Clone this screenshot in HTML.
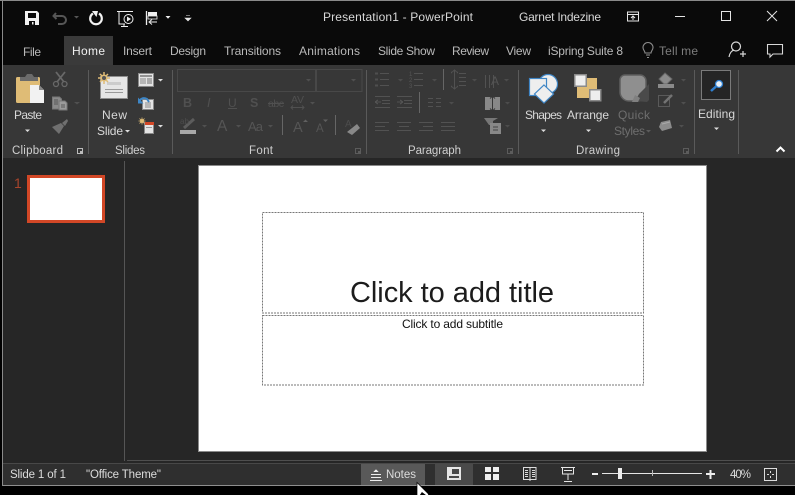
<!DOCTYPE html>
<html><head><meta charset="utf-8"><style>
html,body{margin:0;padding:0;background:#000;width:795px;height:495px;overflow:hidden}
svg{display:block}
text{font-family:"Liberation Sans",sans-serif;font-size:12px;fill:#d8d8d8}
.tab{fill:#b9b9b9}.lab{fill:#cfcfcf;font-size:11.5px}.dis{fill:#6e6e6e}.st{fill:#dcdcdc;font-size:11.5px}
</style></head><body>
<svg width="795" height="495" viewBox="0 0 795 495" xmlns="http://www.w3.org/2000/svg" shape-rendering="crispEdges">
<rect width="795" height="495" fill="#000"/>
<rect x="3" y="1" width="792" height="64" fill="#0a0a0a"/>
<rect x="0" y="0" width="795" height="1" fill="#8a8a8a"/>
<rect x="3" y="65" width="792" height="93" fill="#373737"/>
<rect x="64" y="36" width="49" height="29" fill="#3a3a3a"/>
<rect x="3" y="158" width="792" height="305" fill="#262626"/>
<rect x="3" y="464" width="792" height="21" fill="#2f2f2f"/>
<rect x="3" y="463" width="792" height="1" fill="#484848"/>
<rect x="127" y="460" width="668" height="1" fill="#4f4f4f"/>
<rect x="3" y="485" width="792" height="1" fill="#8f8f8f"/>
<rect x="2" y="0" width="1" height="486" fill="#8a8a8a"/>
<rect x="124" y="161" width="1" height="300" fill="#555"/>

<!-- title bar text -->
<text x="323" y="21" textLength="150">Presentation1  -  PowerPoint</text>
<text x="519" y="21" textLength="82">Garnet Indezine</text>
<!-- tabs -->
<text class="tab" x="23" y="56" textLength="18">File</text>
<text x="72" y="55" textLength="33" style="fill:#f0f0f0">Home</text>
<text class="tab" x="123" y="55" textLength="29">Insert</text>
<text class="tab" x="170" y="55" textLength="36">Design</text>
<text class="tab" x="224" y="55" textLength="57">Transitions</text>
<text class="tab" x="299" y="55" textLength="61">Animations</text>
<text class="tab" x="378" y="55" textLength="57">Slide Show</text>
<text class="tab" x="452" y="55" textLength="37">Review</text>
<text class="tab" x="506" y="55" textLength="25">View</text>
<text class="tab" x="548" y="55" textLength="75">iSpring Suite 8</text>
<text x="659" y="55" textLength="39" style="fill:#7d7d7d">Tell me</text>

<!-- QAT icons -->
<g shape-rendering="auto">
<path fill-rule="evenodd" fill="#f2f2f2" d="M25 11h12l2 2v12H25zM28 13v5h8v-5zM29 21v4h6v-4z"/>
<rect x="32" y="22" width="1.5" height="2.5" fill="#f2f2f2"/>
<path d="M56 13l-2.500 3 3 3M54 16h8a4 4 0 0 1 0 8h-4" fill="none" stroke="#565656" stroke-width="2"/>
<path d="M74 16h5l-2.500 2.500z" fill="#565656"/>
<path d="M93 13.500a5.800 5.800 0 1 0 6 0" fill="none" stroke="#f2f2f2" stroke-width="2.200"/>
<path d="M93 11h6l-1.500 6-2-2.500z" fill="#f2f2f2" transform="translate(-1 0)"/>
<path d="M117 11.500h16M119 12v12h6M124 24v2.500M121 26.500h7" fill="none" stroke="#eee" stroke-width="1"/>
<circle cx="128.500" cy="19" r="4.500" fill="#0a0a0a" stroke="#eee"/>
<path d="M127 16.500l4 2.500-4 2.500z" fill="#eee"/>
<path d="M146.500 11v14" stroke="#eee" stroke-width="1.300" fill="none"/>
<rect x="148" y="12" width="9" height="4" fill="#eee"/><rect x="148" y="16" width="9" height="3" fill="none" stroke="#eee" stroke-width=".8"/>
<path d="M157 22h-7M152 19.500l-3 2.500 3 2.500" fill="none" stroke="#eee"/>
<path d="M165.500 16h5l-2.500 2.800z" fill="#eee"/>
<path d="M186 15.500h4M185 18h6l-3 3z" fill="#e6e6e6" stroke="#e6e6e6" stroke-width=".6"/>

<!-- window controls -->
<path d="M627.500 12h11v9h-11zM627.500 14.500h11M633 20v-4M631 18l2-2 2 2" fill="none" stroke="#e4e4e4"/>
<path d="M675 16.500h10M721.500 11.500h9v9h-9zM767 11l10 10M777 11l-10 10" fill="none" stroke="#e4e4e4"/>
<!-- bulb -->
<path d="M645 53c0-2-2-3-2-5.500a5 5 0 0 1 10 0c0 2.500-2 3.500-2 5.500zM646 55h4M647 57.500h2" fill="none" stroke="#8d8d8d" stroke-width="1.100"/>
<!-- person -->
<circle cx="736" cy="46.500" r="4.500" fill="none" stroke="#d8d8d8" stroke-width="1.200"/>
<path d="M729 57c.5-4 3-6.500 5-7M740 54h6M743 51v6" fill="none" stroke="#d8d8d8" stroke-width="1.200"/>
<!-- comment -->
<path d="M767.500 44.500h15v9.500h-9.500l-3 3v-3h-2.500z" fill="none" stroke="#d8d8d8" stroke-width="1.100"/>

<!-- group separators -->
<g stroke="#5a5a5a" stroke-width="1" shape-rendering="crispEdges">
<path d="M88.500 70v84M172.500 70v84M366.500 70v84M518.500 70v84M694.500 70v84M738.500 70v84"/>
<path d="M443.500 69v21M419.500 92v21M282.500 115v20M335.500 115v20" stroke="#666"/>
</g>

<!-- Paste -->
<rect x="16" y="77" width="24" height="26" rx="1.500" fill="#dfbc76"/>
<path d="M20 77h5l2-3h5l2 3h4v4H20z" fill="#6b6b6b"/>
<path d="M30 85h9l5 5v13H30z" fill="#f2f2f2"/>
<path d="M39 85v5h5z" fill="#888"/>
<!-- cut -->
<path d="M56 72l8 10M65 72l-8 10" stroke="#686868" stroke-width="1.800" fill="none"/>
<circle cx="56" cy="84" r="2.500" fill="none" stroke="#686868" stroke-width="1.300"/><circle cx="64.500" cy="84" r="2.500" fill="none" stroke="#686868" stroke-width="1.300"/>
<!-- copy -->
<path d="M52.500 97h7l2 2v10h-9z" fill="#8a8a8a" stroke="#777"/>
<path d="M59 101h6l2 2v7h-8z" fill="#9b9b9b" stroke="#777"/>
<path d="M54 100h4M54 102h4M54 104h4M61 105h4M61 107h4" stroke="#444" fill="none" stroke-width=".8"/>
<path d="M74 102h6l-3 2.500z" fill="#505050"/>
<!-- painter -->
<path d="M62 123l5-4 1 2-3 5zM52 127l9-4 3 3-5 8z" fill="#707070"/>

<!-- New slide -->
<rect x="100.500" y="76.500" width="27" height="22" fill="#e6e6e6" stroke="#8f8f8f"/>
<rect x="105" y="89" width="18" height="1" fill="#999"/><rect x="105" y="92" width="18" height="1" fill="#999"/><rect x="107" y="82" width="14" height="3" fill="#ccc"/>
<circle cx="104" cy="78" r="3.500" fill="#dfbc76"/>
<path d="M104 72v12M98 78h12M100 74l8 8M108 74l-8 8" stroke="#dfbc76" stroke-width="1.500"/>
<circle cx="104" cy="78" r="2" fill="#555"/>
<!-- Layout -->
<rect x="138.500" y="73.500" width="15" height="13" fill="#e4e4e4" stroke="#8a8a8a"/>
<path d="M140 76h12" stroke="#777" stroke-width="1.500"/><path d="M140 79h6M140 81h6M140 83h6" stroke="#888"/><rect x="147" y="78" width="5" height="6" fill="#aaa"/>
<path d="M158 79h5l-2.500 2.500z" fill="#ddd"/>
<!-- Reset -->
<rect x="142.500" y="99.500" width="11" height="10" fill="#e4e4e4" stroke="#8a8a8a"/>
<path d="M145 103h6M145 105h6M145 107h6" stroke="#888"/>
<path d="M139 102c1-3 4-5 8-3l2 3" fill="none" stroke="#3d86c6" stroke-width="2"/>
<path d="M138 97.500v6h5.500z" fill="#3d86c6"/>
<!-- Section -->
<rect x="144.500" y="122.500" width="9" height="11" fill="#e4e4e4" stroke="#8a8a8a"/>
<rect x="145" y="122" width="9" height="3" fill="#d24726"/><rect x="146" y="127" width="6" height="1" fill="#999"/>
<circle cx="142" cy="121" r="2" fill="#dfbc76"/><path d="M142 117.500v7M138.500 121h7M139.500 118.500l5 5M144.500 118.500l-5 5" stroke="#dfbc76" stroke-width=".8"/>
<path d="M158 125h5l-2.500 2.500z" fill="#ddd"/>

<!-- Font -->
<rect x="177.500" y="69.500" width="138" height="22" fill="none" stroke="#484848"/>
<rect x="316.500" y="69.500" width="45.500" height="22" fill="none" stroke="#484848"/>
<path d="M306 79h5l-2.500 2.500zM351 79h5l-2.500 2.500z" fill="#505050"/>
<text x="183" y="107" style="fill:#505050;font-weight:bold;font-size:12.5px">B</text>
<text x="207" y="107" style="fill:#505050;font-style:italic;font-size:12.500px">I</text>
<text x="228" y="107" style="fill:#505050;font-size:12px">U</text>
<rect x="228" y="108" width="9" height="1" fill="#505050"/>
<text x="250" y="107" style="fill:#505050;font-weight:bold;font-size:12.500px">S</text>
<text x="268" y="107" textLength="16" style="fill:#505050;font-size:10.500px">abc</text>
<rect x="268" y="103" width="16" height="1" fill="#505050"/>
<text x="291" y="103" textLength="13" style="fill:#505050;font-size:10.500px">AV</text>
<path d="M291 107.500h13M293 105.500l-2 2 2 2M302 105.500l2 2-2 2" fill="none" stroke="#505050"/>
<path d="M310 102h5l-2.500 2.500z" fill="#505050"/>
<rect x="180" y="130" width="16" height="4" fill="#a8a8a8"/>
<path d="M184 128l10-9" stroke="#5c5c5c" stroke-width="3" shape-rendering="auto"/>
<text x="180" y="124" style="fill:#4d4d4d;font-size:8px">ab</text>
<path d="M202 125h5l-2.500 2.500zM236 125h5l-2.500 2.500zM268 125h5l-2.500 2.500z" fill="#505050"/>
<text x="217" y="131" style="fill:#555;font-size:15.500px">A</text>
<text x="248" y="131" textLength="15" style="fill:#555;font-size:13px">Aa</text>
<text x="293" y="132" style="fill:#555;font-size:14.500px">A</text>
<text x="316" y="132" style="fill:#555;font-size:11.500px">A</text>
<path d="M303 122l2.500-2.500 2.500 2.500zM323 119.500h5l-2.500 2.500z" fill="#606060"/>
<text x="345" y="127" style="fill:#4c4c4c;font-size:10px">A</text>
<path d="M347 132l10-8 3 4-8 7z" fill="#888" shape-rendering="auto"/>

<g shape-rendering="auto">
<!-- launchers -->
<g fill="none" stroke="#999">
<path d="M77.500 148.500h5v5h-5z" stroke="#bbb"/><path d="M80 151h3v3h-3z" fill="#bbb" stroke="none"/>
<path d="M355.500 148.500h5v5h-5zM507.500 148.500h5v5h-5zM683.500 148.500h5v5h-5z" stroke="#5c5c5c"/>
</g>
<path d="M358 151h3v3h-3zM510 151h3v3h-3zM686 151h3v3h-3z" fill="#5c5c5c"/>

<!-- Paragraph -->
<g stroke="#525252" fill="none" shape-rendering="crispEdges">
<path d="M380 73.500h9M380 79.500h9M380 85.500h9M414 73.500h9M414 79.500h9M414 85.500h9"/>
<path d="M375 73.500h3M375 79.500h3M375 85.500h3" stroke-width="2" stroke="#4f4f4f"/>
<path d="M454.500 70v19M451 73l3.500-3 3.500 3M451 86l3.500 3 3.500-3M459 73.500h7M459 77.500h7M459 81.500h7M459 85.500h7"/>
<path d="M485.500 75v13M489.500 75v13M493.500 75v13"/>
<path d="M375 96.500h15M382 100.500h8M382 103.500h8M375 107.500h15M375 102h6M375 102l3-2M375 102l3 2"/>
<path d="M397 96.500h15M404 100.500h8M404 103.500h8M397 107.500h15M397 102h6M403 102l-3-2M403 102l-3 2"/>
<path d="M428 98.500h5M428 102.500h5M428 106.500h5M436 98.500h5M436 102.500h5M436 106.500h5"/>
<path d="M375 122.500h14M375 126.500h10M375 130.500h14M397 122.500h14M399 126.500h10M397 130.500h14M419 122.500h14M423 126.500h10M419 130.500h14M441 122.500h14M441 126.500h14M441 130.500h14"/>
</g>
<text x="409" y="76" style="fill:#555;font-size:6px">1</text><text x="409" y="82" style="fill:#555;font-size:6px">2</text><text x="409" y="88" style="fill:#555;font-size:6px">3</text>
<text x="491" y="85" style="fill:#555;font-size:12px">A</text>
<path d="M398 79h5l-2.500 2.500zM432 79h5l-2.500 2.500zM472 79h5l-2.500 2.500zM504 79h5l-2.500 2.500zM449 102h5l-2.500 2.500zM505 102h5l-2.500 2.500zM505 125h5l-2.500 2.500z" fill="#4c4c4c"/>
<rect x="485" y="97" width="15" height="13" fill="#888"/><path d="M492.500 96v15M490 98.500l2.500-2.500 2.500 2.500M490 108.500l2.500 2.500 2.500-2.500" stroke="#373737" fill="none"/>
<path d="M484 118h14l-5 3v4h-4z" fill="#777"/><rect x="490" y="123" width="11" height="11" fill="#888"/><path d="M493 127h5M493 130h5" stroke="#444"/>

<!-- Shapes -->
<circle cx="548" cy="84" r="9.500" fill="#eee" stroke="#3f86c6" stroke-width="1.200"/>
<rect x="529.500" y="78.500" width="17" height="17" fill="#eee" stroke="#3f86c6" stroke-width="1.200"/>
<path d="M544 85l9.500 9-9.500 9-9.500-9z" fill="#eee" stroke="#3f86c6" stroke-width="1.200"/>
<!-- Arrange -->
<g shape-rendering="crispEdges">
<rect x="586" y="78" width="11" height="12" fill="#dfbc76"/><rect x="577" y="87" width="13" height="11" fill="#dfbc76"/>
<rect x="574.500" y="74.500" width="11.500" height="11.500" fill="#eee" stroke="#8a8a8a" stroke-width="1.500"/>
<rect x="589.500" y="89.500" width="11" height="11" fill="#eee" stroke="#8a8a8a" stroke-width="1.500"/>
</g>
<!-- Quick styles -->
<path d="M625 75h15a6 6 0 0 1 6 6v12a8 8 0 0 1-8 8h-9a9 9 0 0 1-9-9V80a5 5 0 0 1 5-5z" fill="#8f8f8f" stroke="#5f5f5f" stroke-width="1.500"/>
<path d="M649 84l-10 10-4 7 12 1 2-2z" fill="#4a4a4a"/><path d="M632 102l3-7 5 3-2 4z" fill="#808080"/>
<!-- fill etc -->
<path d="M665 73l7 6-5 5h-3l-5-5z" fill="#8c8c8c" stroke="#666"/>
<rect x="658" y="84" width="16" height="4" fill="#8a8a8a"/>
<path d="M658.500 95.500h11v11h-11z" fill="none" stroke="#5a5a5a" shape-rendering="crispEdges"/>
<path d="M664 103l8-8" stroke="#737373" stroke-width="2.500"/>
<path d="M661 122l9-2 2 8-10 3-3-4z" fill="#8c8c8c"/><path d="M662 124l8-2" stroke="#aaa"/>
<path d="M681 79h5l-2.500 2.500zM681 102h5l-2.500 2.500zM679 125h5l-2.500 2.500z" fill="#4f4f4f"/>
<!-- editing btn -->
<rect x="701.500" y="70.500" width="29" height="29" fill="#252525" stroke="#7a7a7a" shape-rendering="crispEdges"/>
<path d="M711 91l5-4.500" stroke="#2f7fd0" stroke-width="2.500"/>
<circle cx="719" cy="84" r="3.500" fill="#e8f0f8" stroke="#2f7fd0" stroke-width="1.300"/>

<!-- drop carets -->
<path d="M25 129.500h5l-2.500 2.500zM125 130h5l-2.500 2.500zM541 129.500h5l-2.500 2.500zM586 129.500h5l-2.500 2.500zM714 127.500h5l-2.500 2.500z" fill="#dcdcdc"/>
<path d="M646 130h5l-2.500 2.500z" fill="#5c5c5c"/>
<path d="M776.500 151.500l4-4 4 4" fill="none" stroke="#fff" stroke-width="2"/>
</g>

<!-- ribbon labels -->
<text x="14" y="119" textLength="28">Paste</text>
<text x="102" y="119" textLength="25">New</text>
<text x="97" y="135" textLength="26">Slide</text>
<text x="525" y="119" textLength="37">Shapes</text>
<text x="567" y="119" textLength="42">Arrange</text>
<text class="dis" x="618" y="119" textLength="32">Quick</text>
<text class="dis" x="614" y="135" textLength="31">Styles</text>
<text x="698" y="118" textLength="37">Editing</text>
<text class="lab" x="12" y="154" textLength="51">Clipboard</text>
<text class="lab" x="115" y="154" textLength="30">Slides</text>
<text class="lab" x="249" y="154" textLength="24">Font</text>
<text class="lab" x="408" y="154" textLength="53">Paragraph</text>
<text class="lab" x="576" y="154" textLength="44">Drawing</text>

<!-- thumbnail -->
<rect x="28.500" y="176.500" width="75" height="45" fill="#fff" stroke="#d24726" stroke-width="3"/>
<text x="14" y="188" style="font-size:14px;fill:#a8452c">1</text>

<!-- slide -->
<rect x="198.500" y="165.500" width="508" height="286" fill="#fff" stroke="#8a8a8a"/>
<rect x="262.500" y="212.500" width="381" height="100.500" fill="none" stroke="#777" stroke-dasharray="2 1"/>
<rect x="262.500" y="315.500" width="381" height="69.500" fill="none" stroke="#777" stroke-dasharray="2 1"/>
<text x="350" y="302" textLength="204" style="font-size:29px;fill:#1c1c1c">Click to add title</text>
<text x="402" y="328" textLength="101" style="font-size:12px;fill:#111">Click to add subtitle</text>

<!-- status bar -->
<rect x="361" y="464" width="64" height="21" fill="#595959"/>
<rect x="435" y="464" width="38" height="21" fill="#4a4a4a"/>
<text class="st" x="10" y="478" textLength="56">Slide 1 of 1</text>
<text class="st" x="86" y="478" textLength="75">"Office Theme"</text>
<text class="st" x="386" y="478" textLength="30">Notes</text>
<text class="st" x="730" y="478" textLength="21">40%</text>
<g shape-rendering="crispEdges">
<path d="M370 480.500h12M371 477.500h10M371 474.500h10" stroke="#eee" fill="none"/>
<path d="M373.500 472l2.500-3 2.500 3z" fill="#eee"/>
<path fill-rule="evenodd" fill="#e6e6e6" d="M447 467h14v13h-14zM452 469v5h7v-5zM449 476v2h10v-2z"/>
<rect x="485" y="467" width="6" height="5" fill="#eee"/><rect x="493" y="467" width="6" height="5" fill="#eee"/>
<rect x="485" y="474" width="6" height="6" fill="#eee"/><rect x="493" y="474" width="6" height="6" fill="#eee"/>
<path d="M523.500 467.500h6l.5 1 .5-1h5.500v12h-5.500l-.5 1-.5-1h-6zM530 468v13M525 470.500h3M525 472.500h3M525 474.500h3M525 476.500h3M532 470.500h3M532 472.500h3M532 474.500h3M532 476.500h3" fill="none" stroke="#ddd" stroke-width="1"/>
<path d="M561 467.500h14M562.500 468v6h11v-6M568 474v6M564 481.500h8M564 470.500h8" fill="none" stroke="#e6e6e6"/>
<rect x="592" y="473" width="6" height="2" fill="#eee"/>
<rect x="602" y="473" width="100" height="1" fill="#e6e6e6"/>
<rect x="652" y="470" width="1" height="6" fill="#bbb"/>
<rect x="618" y="468" width="4" height="11" fill="#eee"/>
<rect x="706" y="473" width="9" height="2" fill="#eee"/><rect x="709.500" y="470" width="2" height="9" fill="#eee"/>
<rect x="764.500" y="468.500" width="12" height="12" fill="none" stroke="#ddd"/>
<path d="M770 471h1v2h-1zM770 476h1v2h-1zM767 474h2v1h-2zM772 474h2v1h-2z" fill="#ddd"/>
</g>
<!-- cursor -->
<path d="M417 482.500v13h3l2-3 4 3h3l-1-2z" fill="#fff" stroke="#000" stroke-width=".7" shape-rendering="auto"/>
</svg>
</body></html>
